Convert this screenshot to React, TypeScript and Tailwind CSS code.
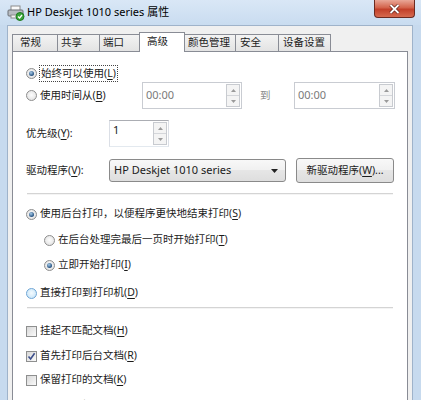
import React from 'react'

const font = "font-['Noto_Sans','Noto_Sans_CJK_SC',sans-serif]"

const tabs = [
  { label: '常规', cls: 'w-[46px] pl-[7px]' },
  { label: '共享', cls: '-ml-px w-[43px] pl-[3px]' },
  { label: '端口', cls: '-ml-px w-[43px] pl-[3px]' },
  { label: '高级', cls: 'ml-[-3px] w-[46px] pl-[7px]', active: true },
  { label: '颜色管理', cls: '-ml-px w-[52px] pl-[3px]' },
  { label: '安全', cls: '-ml-px w-[44px] pl-[4px]' },
  { label: '设备设置', cls: '-ml-px w-[53px] pl-[4px]' },
]

// mnemonic letter, underlined like the win32 dialog
const Mn = ({ k }: { k: string }) => (
  <>
    (<span className="underline underline-offset-[2px] decoration-[1px]">{k}</span>)
  </>
)

const Radio = ({ checked, hover }: { checked?: boolean; hover?: boolean }) => (
  <span
    className={
      hover
        ? 'flex w-[11px] h-[11px] shrink-0 items-center justify-center rounded-full border border-[#6fa6d6] bg-[radial-gradient(circle_at_50%_45%,#f4fbff,#bfe0f6)]'
        : 'flex w-[11px] h-[11px] shrink-0 items-center justify-center rounded-full border border-[#8d8d8d] bg-[radial-gradient(circle_at_50%_45%,#fdfdfd,#dcdcdc)]'
    }
  >
    {checked && (
      <span className="w-[5px] h-[5px] rounded-full bg-[radial-gradient(circle_at_40%_35%,#a9cdea,#24507f_70%)]" />
    )}
  </span>
)

const Check = ({ checked }: { checked?: boolean }) => (
  <span className="flex w-[11px] h-[11px] shrink-0 items-center justify-center border border-[#8e8f8f] bg-[linear-gradient(135deg,#d8d8d8,#fafafa)]">
    {checked && (
      <svg width="9" height="9" viewBox="0 0 9 9">
        <path d="M1.5 4.5 L3.6 7 L7.6 1.2" stroke="#3c4f8c" strokeWidth="1.6" fill="none" />
      </svg>
    )}
  </span>
)

const Spin = () => (
  <div className="flex flex-col w-[14px] h-[23px] border border-[#c8cbd0] bg-[#f4f4f4]">
    <div className="flex-1 flex items-center justify-center border-b border-[#d4d6da]">
      <svg width="5" height="3" viewBox="0 0 5 3">
        <path d="M0 3 L2.5 0 L5 3Z" fill="#9a9a9a" />
      </svg>
    </div>
    <div className="flex-1 flex items-center justify-center">
      <svg width="5" height="3" viewBox="0 0 5 3">
        <path d="M0 0 L2.5 3 L5 0Z" fill="#9a9a9a" />
      </svg>
    </div>
  </div>
)

const TimeBox = ({ w }: { w: string }) => (
  <div className={`${w} h-[27px] flex items-center justify-between border border-[#c9ccd2] bg-white pl-[3px] pr-[1px] text-[#7a7a7a] text-[11px]`}>
    <span>00:00</span>
    <Spin />
  </div>
)

const Row = ({ className, children }: { className: string; children: React.ReactNode }) => (
  <div className={`flex items-center ${className}`}>{children}</div>
)

const PrinterIcon = () => (
  <svg width="18" height="16" viewBox="0 0 18 16">
    <rect x="4" y="1" width="9" height="5" fill="#fafafa" stroke="#8c8c8c" />
    <rect x="1" y="5" width="15" height="6" rx="1" fill="#b8bcc2" stroke="#6b6f75" />
    <rect x="4" y="10" width="9" height="3" fill="#f4f4f4" stroke="#8c8c8c" />
    <circle cx="13" cy="11.5" r="4" fill="#3aa53a" stroke="#1f7a1f" />
    <path d="M11 11.5 L12.6 13 L15 10" stroke="#fff" strokeWidth="1.3" fill="none" />
  </svg>
)

export default function App() {
  return (
    <div className={`w-[421px] h-[400px] overflow-hidden bg-[#c7daee] ${font} text-[10.5px] text-[#1b1b1b]`}>
      {/* title bar */}
      <div className="relative h-[25px] flex items-center pl-[7px] bg-[linear-gradient(#d9e7f6,#c9dcf0)]">
        <PrinterIcon />
        <span className="ml-[2px] text-[11px] text-black">HP Deskjet 1010 series 属性</span>
        <div className="absolute right-[6px] top-0 w-[41px] h-[18px] flex items-center justify-center rounded-b-[4px] border border-t-0 border-[#6b2a20] bg-[linear-gradient(#e9a797,#d3634b_45%,#c2402a_55%,#d66a4f)]">
          <svg width="11" height="10" viewBox="0 0 11 10">
            <path d="M1.5 1 L9.5 9 M9.5 1 L1.5 9" stroke="#5a1c14" strokeWidth="3.2" />
            <path d="M1.5 1 L9.5 9 M9.5 1 L1.5 9" stroke="#fff" strokeWidth="1.8" />
          </svg>
        </div>
      </div>

      {/* client area */}
      <div className="ml-[7px] mr-[8px] h-[400px] border border-[#9fb3ca] bg-[#f0f0f0] pt-[5px] pl-[4px] pr-[4px]">
        <div className="flex items-end h-[20px]">
          {tabs.map((t) =>
            t.active ? (
              <div
                key={t.label}
                className={`${t.cls} relative z-10 h-[20px] -mb-px flex items-center border border-b-0 border-[#898c95] bg-white pb-[2px]`}
              >
                {t.label}
              </div>
            ) : (
              <div
                key={t.label}
                className={`${t.cls} h-[17px] flex items-center border border-b-0 border-[#898c95] bg-[linear-gradient(#f3f3f3,#e3e3e3)]`}
              >
                {t.label}
              </div>
            )
          )}
        </div>

        <div className="h-[400px] border border-[#898c95] bg-white pl-[13px]">
          <Row className="mt-[12px] h-[18px]">
            <Radio checked />
            <span className="ml-[2px] px-[1px] border border-dotted border-[#444] leading-[15px]">
              始终可以使用<Mn k="L" />
            </span>
          </Row>

          <Row className="h-[27px]">
            <div className="w-[116px] flex items-center">
              <Radio />
              <span className="ml-[3px]">
                使用时间从<Mn k="B" />
              </span>
            </div>
            <TimeBox w="w-[100px]" />
            <span className="w-[52px] pl-[18px] text-[#8a8a8a]">到</span>
            <TimeBox w="w-[101px]" />
          </Row>

          <Row className="mt-[11px] h-[27px]">
            <span className="w-[83px]">
              优先级<Mn k="Y" />:
            </span>
            <div className="w-[60px] h-[27px] flex items-start justify-between border border-[#abadb3] border-b-[#e3e9ef] border-x-[#dbdfe6] bg-white pl-[3px] pr-[1px] pt-[1px] text-[11px]">
              <span className="leading-[16px]">1</span>
              <Spin />
            </div>
          </Row>

          <Row className="mt-[11px] h-[25px]">
            <span className="w-[83px]">
              驱动程序<Mn k="V" />:
            </span>
            <div className="w-[177px] h-[23px] flex items-center justify-between rounded-[3px] border border-[#8a8a8a] bg-[linear-gradient(#f8f8f8,#f0f0f0_50%,#e6e6e6_50%,#dedede)] pl-[4px] pr-[7px] text-[11px]">
              <span>HP Deskjet 1010 series</span>
              <svg width="7" height="4" viewBox="0 0 7 4">
                <path d="M0 0 L7 0 L3.5 4Z" fill="#222" />
              </svg>
            </div>
            <div className="ml-[10px] w-[98px] h-[25px] flex items-center justify-center rounded-[3px] border border-[#8a8a8a] bg-[linear-gradient(#f8f8f8,#f0f0f0_50%,#e6e6e6_50%,#dedede)]">
              新驱动程序<Mn k="W" />...
            </div>
          </Row>

          <div className="mt-[10px] ml-[1px] w-[366px] h-[2px] border-t border-[#d4d4d4] border-b border-b-[#f4f4f4]" />

          <Row className="mt-[10px] h-[18px]">
            <Radio checked />
            <span className="ml-[3px]">
              使用后台打印，以便程序更快地结束打印<Mn k="S" />
            </span>
          </Row>
          <Row className="mt-[8px] h-[18px] pl-[18px]">
            <Radio />
            <span className="ml-[3px]">
              在后台处理完最后一页时开始打印<Mn k="T" />
            </span>
          </Row>
          <Row className="mt-[7px] h-[18px] pl-[18px]">
            <Radio checked />
            <span className="ml-[3px]">
              立即开始打印<Mn k="I" />
            </span>
          </Row>
          <Row className="mt-[10px] h-[18px]">
            <Radio hover />
            <span className="ml-[3px]">
              直接打印到打印机<Mn k="D" />
            </span>
          </Row>

          <div className="mt-[5px] ml-[1px] w-[366px] h-[2px] border-t border-[#d4d4d4] border-b border-b-[#f4f4f4]" />

          <Row className="mt-[13px] h-[18px]">
            <Check />
            <span className="ml-[3px]">
              挂起不匹配文档<Mn k="H" />
            </span>
          </Row>
          <Row className="mt-[7px] h-[18px]">
            <Check checked />
            <span className="ml-[3px]">
              首先打印后台文档<Mn k="R" />
            </span>
          </Row>
          <Row className="mt-[6px] h-[18px]">
            <Check />
            <span className="ml-[3px]">
              保留打印的文档<Mn k="K" />
            </span>
          </Row>
          <Row className="mt-[8px] h-[18px]">
            <Check checked />
            <span className="ml-[3px]">
              启用高级打印功能<Mn k="E" />
            </span>
          </Row>
        </div>
      </div>
    </div>
  )
}
